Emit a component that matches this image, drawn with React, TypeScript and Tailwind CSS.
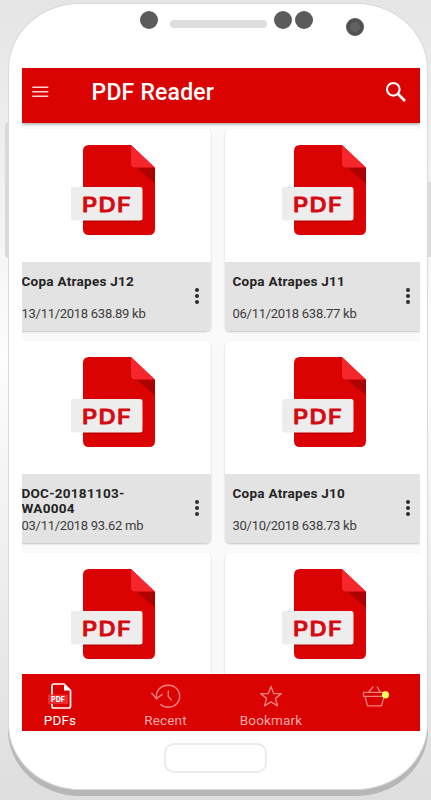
const documents = [
  { id: 1, name: "Copa Atrapes J12", date: "13/11/2018", size: "638.89 kb" },
  { id: 2, name: "Copa Atrapes J11", date: "06/11/2018", size: "638.77 kb" },
  { id: 3, name: "DOC-20181103-WA0004", date: "03/11/2018", size: "93.62 mb" },
  { id: 4, name: "Copa Atrapes J10", date: "30/10/2018", size: "638.73 kb" },
  { id: 5 },
  { id: 6 },
];

function PdfFileIcon() {
  return (
    <svg width="86" height="94" viewBox="0 0 86 94" className="ml-[4px] block">
      <path d="M18 1H60L84 24V85Q84 91 78 91H18Q12 91 12 85V7Q12 1 18 1Z" fill="#db0202" />
      <path d="M65 23.5H84V39.5Z" fill="#ad0202" />
      <path d="M60 1L84 23.5H64Q60 23.5 60 19.5Z" fill="#f5272d" />
      <path d="M12 70H71.5V75Q71.5 78.2 68.5 78.2H12Z" fill="#a80000" opacity=".5" />
      <rect x="0" y="43" width="71.5" height="33.4" rx="2.5" fill="#ededed" />
      <text
        x="10.9"
        y="67.6"
        textLength="50.5"
        lengthAdjust="spacingAndGlyphs"
        fontSize="20"
        fill="#d40a12"
        stroke="#d40a12"
        strokeWidth=".9"
        strokeLinejoin="round"
        className="font-['Inter'] font-medium tracking-[1.2px]"
      >
        PDF
      </text>
    </svg>
  );
}

function DocumentCard({ doc }: { doc: (typeof documents)[number] }) {
  return (
    <article className="flex h-[202px] flex-col overflow-hidden rounded-[5px] bg-white shadow-[0_1px_2px_rgba(0,0,0,0.22)]">
      <div className="flex h-[133px] shrink-0 justify-center pt-[15px]">
        <PdfFileIcon />
      </div>
      {doc.name && (
        <div className="flex h-[69px] items-center bg-[#e3e3e3] pl-[8px]">
          <div className="flex h-full w-[140px] flex-col justify-between pb-[10px] pt-[12px]">
            <h2 className="text-[13.5px] font-bold leading-[15px] tracking-[0.27px] text-[#242424]">
              {doc.name}
            </h2>
            <p className="whitespace-nowrap text-[13px] leading-[15px] tracking-[-0.28px] text-[#3c3c3c]">
              {doc.date} {doc.size}
            </p>
          </div>
          <div className="ml-[33px] flex flex-col gap-[2px]">
            <span className="size-[4px] rounded-full bg-[#2b2b2b]" />
            <span className="size-[4px] rounded-full bg-[#2b2b2b]" />
            <span className="size-[4px] rounded-full bg-[#2b2b2b]" />
          </div>
        </div>
      )}
    </article>
  );
}

function AppBar() {
  return (
    <header className="relative z-10 flex h-[55px] shrink-0 items-center bg-[#db0202] pb-[6px] pl-[10px] pr-[13px] shadow-[0_1px_3px_rgba(0,0,0,0.4)]">
      <svg width="17" height="14" viewBox="0 0 17 14" stroke="#fbd5d5" strokeWidth="1.5">
        <path d="M.3 2.3H16.3M.3 6.8H16.3M.3 11.3H16.3" />
      </svg>
      <h1 className="ml-[43px] pt-[3px] text-[23px] font-medium tracking-[0.2px] text-white">PDF Reader</h1>
      <svg width="22" height="22" viewBox="0 0 22 22" className="ml-auto" fill="none" stroke="white">
        <circle cx="8.3" cy="8.3" r="6.3" strokeWidth="2.1" />
        <path d="M12.8 12.8L20 20" strokeWidth="2.7" />
      </svg>
    </header>
  );
}

function BottomNav() {
  return (
    <nav className="relative z-10 flex h-[57px] shrink-0 bg-[#db0202] pt-[8px] text-[13.5px] leading-[16px] tracking-[0.15px] text-[#f3a9a9]">
      <div className="flex w-[77px] flex-col items-center gap-[2px] text-white">
        <svg width="26" height="28" viewBox="0 0 26 28" fill="none">
          <path d="M5 13V4Q5 2 7 2H17L23.5 8.5V24Q23.5 26 21.5 26H7Q5 26 5 24V21" stroke="white" strokeWidth="1.7" />
          <path d="M17 1.5V8.5H24Z" fill="white" />
          <rect x="1" y="12.5" width="20" height="9.5" rx="1" fill="#f02b30" />
          <text x="4" y="20" textLength="14" lengthAdjust="spacingAndGlyphs" fontSize="7" fill="white" className="font-['Inter'] font-extrabold">
            PDF
          </text>
        </svg>
        <span>PDFs</span>
      </div>
      <div className="flex w-[134px] flex-col items-center gap-[2px]">
        <svg width="30" height="28" viewBox="0 0 30 28" fill="none" stroke="#f08080" strokeWidth="1.4" strokeLinecap="round" strokeLinejoin="round">
          <path d="M5.5 16.5C4.5 9 9.5 3.2 17.3 3.2C24 3.2 28.7 8 28.7 14.2C28.7 20.5 24 25.2 17.5 25.2C14 25.2 11.5 24.2 9.7 22.5" />
          <path d="M.8 11.3L5.4 16.8L11.2 12.4" />
          <path d="M17.3 9V14.5L20.3 18" />
        </svg>
        <span>Recent</span>
      </div>
      <div className="flex w-[77px] flex-col items-center gap-[2px]">
        <svg width="24" height="28" viewBox="0 0 24 28" fill="none" stroke="#f08080" strokeWidth="1.4" strokeLinejoin="round">
          <path d="M12 4.5L14.7 11.6H22.3L16.4 16.4L18.5 23.9L12 19.8L5.5 23.9L7.6 16.4L1.7 11.6H9.3Z" />
        </svg>
        <span>Bookmark</span>
      </div>
      <div className="ml-[26px] flex w-[80px] justify-center">
        <svg width="28" height="28" viewBox="0 0 28 28" fill="none" stroke="#f08080" strokeWidth="1.3" strokeLinejoin="round">
          <path d="M1.5 10.4H23V14.4H1.5ZM3 14.4L5.5 23.8H19.5L22 14.4M6.5 10.4L11.3 4.5M18.5 10.4L15 4.5" />
          <circle cx="23.5" cy="12.8" r="3.6" fill="#ffff55" stroke="none" />
        </svg>
      </div>
    </nav>
  );
}

export default function App() {
  return (
    <div className="relative h-[800px] w-[431px] overflow-hidden bg-linear-to-b from-[#e5e5e5] via-[#fdfdfd] via-45% to-[#dedede] pl-[8px] pt-[3px] font-['Roboto',sans-serif]">
      {/* Side keys behind the case */}
      <div className="absolute left-[5px] top-[122px] h-[136px] w-[5px] rounded-l-sm bg-[#d9d9d9]" />
      <div className="absolute left-[425px] top-[182px] h-[75px] w-[6px] bg-[#dcdcdc]" />

      <div className="relative flex h-[787px] w-[420px] flex-col rounded-[72px/66px] border-[1.5px] border-[#d9d9d9] bg-white pl-[12.5px] shadow-[0_6px_0_#b7b7b7]">
        <div className="flex h-[63.5px] shrink-0 items-start pl-[118px] pt-[7px]">
          <span className="size-[18px] rounded-full bg-[#5b5b5b]" />
          <span className="ml-[12px] mt-[8.5px] h-[8px] w-[97px] rounded-full bg-[#dedede]" />
          <span className="ml-[7px] size-[18px] rounded-full bg-[#5b5b5b]" />
          <span className="ml-[3px] size-[18px] rounded-full bg-[#5b5b5b]" />
          <span className="ml-[33px] mt-[7px] size-[18px] rounded-full border-[4px] border-[#515151] bg-[#626262]" />
        </div>

        <main className="flex h-[663px] w-[398px] shrink-0 flex-col overflow-hidden bg-[#fafafa]">
          <AppBar />
          <div className="min-h-0 flex-1 overflow-hidden">
            <div className="-ml-[8px] grid w-[408px] grid-cols-[197px_197px] gap-x-[14px] gap-y-[10px] pt-[6px]">
              {documents.map((doc) => (
                <DocumentCard key={doc.id} doc={doc} />
              ))}
            </div>
          </div>
          <BottomNav />
        </main>

        <div className="ml-[142px] mt-[12px] h-[30px] w-[103px] shrink-0 rounded-[10px] border-2 border-[#ebebeb]" />
      </div>
    </div>
  );
}
